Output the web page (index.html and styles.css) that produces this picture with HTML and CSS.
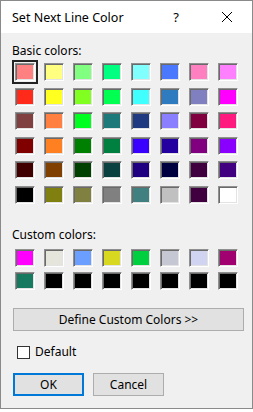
FILE: index.html
```html
<!DOCTYPE html>
<html lang="en">
<head>
    <meta charset="UTF-8">
    <meta name="viewport" content="width=device-width, initial-scale=1.0">
    <title>Set Next Line Color</title>
    <link rel="stylesheet" href="styles.css">
</head>
<body>
    <div class="dialog">
        <div class="titlebar">
            <span class="title">Set Next Line Color</span>
            <span class="help">?</span>
            <svg class="close" width="12" height="12" viewBox="0 0 12 12">
                <path d="M1 1 L11 11 M11 1 L1 11" stroke="#000" stroke-width="1" fill="none"/>
            </svg>
        </div>
        <div class="content">
            <div class="label basic-label">Basic colors:</div>
            <div class="grid" id="basic"></div>

            <div class="label custom-label">Custom colors:</div>
            <div class="grid custom" id="custom"></div>

            <button class="btn btn-define">Define Custom Colors &gt;&gt;</button>

            <label class="check">
                <span class="box"></span>
                <span>Default</span>
            </label>

            <div class="actions">
                <button class="btn btn-ok">OK</button>
                <button class="btn">Cancel</button>
            </div>
        </div>
    </div>

    <script>
        const basicColors = [
            "#ff8080", "#ffff80", "#80ff80", "#00ff80", "#80ffff", "#4a78ff", "#ff80c0", "#ff80ff",
            "#ff2a1a", "#ffff20", "#80ff20", "#00ff50", "#40ffff", "#2e7bc0", "#8080c0", "#ff00ff",
            "#804040", "#ff8040", "#00ff20", "#1e7a7a", "#1f3a80", "#8a80ff", "#800040", "#ff1a80",
            "#800000", "#ff8020", "#008000", "#008040", "#3a00ff", "#2400a0", "#800080", "#8a00ff",
            "#400000", "#804000", "#004000", "#0a4040", "#1e0080", "#000040", "#400040", "#400080",
            "#000000", "#808010", "#808040", "#808080", "#408080", "#c0c0c0", "#400040", "#ffffff"
        ];
        const customColors = [
            "#ff00ff", "#e5e5dc", "#6a9eff", "#d8d820", "#00d040", "#c5c8d2", "#d0d4f0", "#a00070",
            "#157a60", "#000000", "#000000", "#000000", "#000000", "#000000", "#000000", "#000000"
        ];

        function isiGrid(id, colors, selected) {
            const grid = document.getElementById(id);
            colors.forEach((c, i) => {
                const cell = document.createElement("div");
                cell.className = "swatch" + (i === selected ? " selected" : "");
                cell.style.background = c;
                grid.appendChild(cell);
            });
        }

        isiGrid("basic", basicColors, 0);
        isiGrid("custom", customColors, -1);
    </script>
</body>
</html>
```

FILE: styles.css
```css
body {
    margin: 0;
    background: #fff;
    font-family: "Noto Sans", "Open Sans", sans-serif;
    font-size: 12px;
    color: #000;
}
.dialog {
    width: 253px;
    height: 409px;
    box-sizing: border-box;
    border: 1px solid #8a8a8a;
    background: #f0f0f0;
    display: flex;
    flex-direction: column;
}
.titlebar {
    height: 32px;
    background: #fff;
    display: flex;
    align-items: center;
    padding-left: 11px;
}
.title {
    font-size: 12.5px;
    flex: 1;
}
.help {
    font-size: 13px;
    margin-right: 42px;
}
.close {
    margin-right: 19px;
}
.content {
    padding: 10px 0 0 11px;
}
.label {
    line-height: 16px;
}
.grid {
    display: grid;
    grid-template-columns: repeat(8, 20px);
    column-gap: 9px;
    row-gap: 6.6px;
    margin: 4px 0 0 3px;
}
.grid.custom {
    row-gap: 5.5px;
    margin-top: 6px;
}
.custom-label {
    margin-top: 23px;
}
.swatch {
    height: 18px;
    box-sizing: border-box;
    border: 1px solid;
    border-color: #909090 #fff #fff #909090;
    box-shadow: inset 1px 1px 0 #6a6a6a, inset -1px -1px 0 #e3e3e3;
}
.swatch.selected {
    outline: 2px solid #222;
    outline-offset: 1px;
}
.btn {
    font-family: inherit;
    font-size: 12px;
    background: #e1e1e1;
    border: 1px solid #adadad;
    height: 23px;
    padding: 0;
    color: #000;
}
.btn-define {
    display: block;
    width: 231px;
    margin: 18px 0 0 1px;
}
.check {
    display: flex;
    align-items: center;
    gap: 5px;
    margin: 13px 0 0 5px;
    line-height: 16px;
}
.box {
    width: 13px;
    height: 13px;
    box-sizing: border-box;
    border: 1px solid #333;
    background: #fff;
}
.actions {
    display: flex;
    gap: 9px;
    margin: 13px 0 0 1px;
}
.actions .btn {
    width: 71px;
}
.btn-ok {
    border: 2px solid #0078d7;
}
```
